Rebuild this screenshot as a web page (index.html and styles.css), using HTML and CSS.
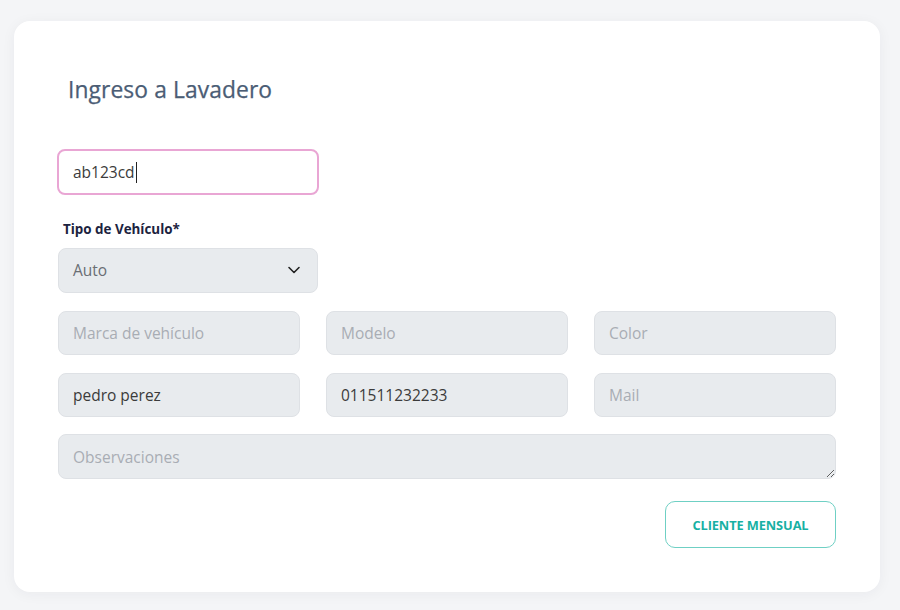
FILE: index.html
```html
<!DOCTYPE html>
<html lang="es">
<head>
<meta charset="utf-8">
<title>Ingreso a Lavadero</title>
<link rel="stylesheet" href="styles.css">
</head>
<body>
<main class="card">
  <h1 class="title">Ingreso a Lavadero</h1>
  <div class="field-plate">
    <div class="input input-focus">ab123cd<span class="caret"></span></div>
  </div>
  <label class="label">Tipo de Vehículo*</label>
  <div class="select-wrap">
    <div class="input select">Auto</div>
    <svg class="chevron" width="14" height="14" viewBox="0 0 14 14"><path d="M2 4.5 L7 9.5 L12 4.5" fill="none" stroke="#222" stroke-width="1.6" stroke-linecap="round" stroke-linejoin="round"/></svg>
  </div>
  <div class="grid">
    <input class="input" type="text" placeholder="Marca de vehículo">
    <input class="input" type="text" placeholder="Modelo">
    <input class="input" type="text" placeholder="Color">
    <input class="input" type="text" value="pedro perez">
    <input class="input" type="text" value="011511232233">
    <input class="input" type="text" placeholder="Mail">
  </div>
  <textarea class="input textarea" placeholder="Observaciones"></textarea>
  <div class="actions">
    <button class="btn">CLIENTE MENSUAL</button>
  </div>
</main>
</body>
</html>
```
FILE: styles.css
```css
* { box-sizing: border-box; }
html, body { margin: 0; padding: 0; }
body {
  background: #f4f5f7;
  font-family: "Open Sans", "Liberation Sans", sans-serif;
  width: 900px;
  height: 610px;
  overflow: hidden;
  padding: 21px 20px 0 14px;
}
.card {
  width: 866px;
  height: 571px;
  background: #ffffff;
  border-radius: 16px;
  box-shadow: 0 2px 14px rgba(30, 40, 60, 0.05);
  padding: 54px 44px 0 44px;
  display: flex;
  flex-direction: column;
}
.title {
  margin: 0 0 0 10px;
  font-size: 22.8px;
  line-height: 30px;
  font-weight: 400;
  color: #4b5d75;
  letter-spacing: 0.1px;
  -webkit-text-stroke: 0.25px #4b5d75;
}
.field-plate { margin-top: 44px; width: 262px; margin-left: -1px; }
.input {
  display: block;
  width: 100%;
  height: 44px;
  background: #e8ebee;
  border: 1px solid #dee1e5;
  border-radius: 8px;
  padding: 0 14px;
  font-family: "Open Sans", "Liberation Sans", sans-serif;
  font-size: 15.5px;
  color: #3b3b3b;
  outline: none;
}
.input::placeholder { color: #a8adb4; }
.input-focus {
  height: 46px;
  line-height: 42px;
  background: #ffffff;
  border: 2px solid #e9a6d4;
  padding: 0 14px;
}
.caret {
  display: inline-block;
  width: 1px;
  height: 21px;
  background: #222;
  vertical-align: -5px;
  margin-left: 1px;
}
.label {
  display: block;
  margin-top: 25px;
  margin-left: 5px;
  font-size: 13.4px;
  line-height: 18px;
  font-weight: 700;
  color: #1c2340;
}
.select-wrap {
  position: relative;
  width: 260px;
  margin-top: 10px;
}
.select {
  height: 45px;
  line-height: 43px;
  color: #6a6e74;
}
.chevron {
  position: absolute;
  right: 17px;
  top: 15px;
}
.grid {
  margin-top: 18px;
  display: grid;
  grid-template-columns: repeat(3, 1fr);
  column-gap: 26px;
  row-gap: 18px;
}
.textarea {
  margin-top: 17px;
  height: 45px;
  padding-top: 10px;
  line-height: 24px;
  resize: vertical;
}
.actions {
  margin-top: 22px;
  display: flex;
  justify-content: flex-end;
}
.btn {
  width: 171px;
  height: 47px;
  background: #ffffff;
  border: 1px solid #6fd0c4;
  border-radius: 10px;
  color: #17b0a3;
  font-family: "Open Sans", "Liberation Sans", sans-serif;
  font-size: 12.8px;
  font-weight: 700;
  letter-spacing: -0.1px;
  padding: 0;
}
```
